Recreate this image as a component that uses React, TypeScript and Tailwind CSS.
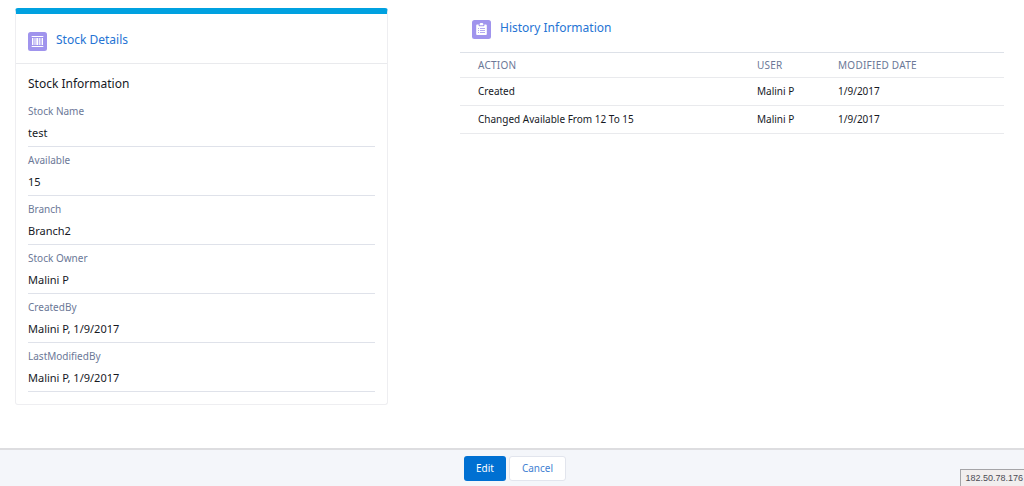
import React from 'react';

type Field = { label: string; value: string };
type HistoryEntry = { action: string; user: string; date: string };

const fields: Field[] = [
  { label: 'Stock Name', value: 'test' },
  { label: 'Available', value: '15' },
  { label: 'Branch', value: 'Branch2' },
  { label: 'Stock Owner', value: 'Malini P' },
  { label: 'CreatedBy', value: 'Malini P, 1/9/2017' },
  { label: 'LastModifiedBy', value: 'Malini P, 1/9/2017' },
];

const history: HistoryEntry[] = [
  { action: 'Created', user: 'Malini P', date: '1/9/2017' },
  { action: 'Changed Available From 12 To 15', user: 'Malini P', date: '1/9/2017' },
];

const StockIcon = () => (
  <svg viewBox="0 0 19 19" className="h-[19px] w-[19px] shrink-0" aria-hidden="true">
    <rect width="19" height="19" rx="2.5" fill="#a094ed" />
    <g fill="#fff">
      <rect x="3.5" y="4" width="12" height="1" rx="0.4" />
      <rect x="3.5" y="14" width="12" height="1" rx="0.4" />
      <rect x="4" y="6" width="1.4" height="7" />
      <rect x="6.5" y="6" width="1" height="7" />
      <rect x="8.3" y="6" width="2" height="7" />
      <rect x="11.2" y="6" width="1.2" height="7" />
      <rect x="13.6" y="6" width="1.4" height="7" />
    </g>
  </svg>
);

const HistoryIcon = () => (
  <svg viewBox="0 0 19 19" className="h-[19px] w-[19px] shrink-0" aria-hidden="true">
    <rect width="19" height="19" rx="2.5" fill="#a094ed" />
    <path
      fill="#fff"
      d="M7.6 4.2c0-.7.8-1.2 1.9-1.2s1.9.5 1.9 1.2v.6c0 .3-.2.5-.5.5H8.1c-.3 0-.5-.2-.5-.5z"
    />
    <path
      fill="#fff"
      d="M5.3 4.4h1.3v.8c0 .6.5 1.1 1.1 1.1h3.6c.6 0 1.1-.5 1.1-1.1v-.8h1.3c.6 0 1.1.5 1.1 1.1v8.4c0 .6-.5 1.1-1.1 1.1H5.3c-.6 0-1.1-.5-1.1-1.1V5.5c0-.6.5-1.1 1.1-1.1z"
    />
    <path
      stroke="#a094ed"
      strokeWidth="0.8"
      d="M6 8.5h1M8 8.5h5M6 10.5h1M8 10.5h5M6 12.5h1M8 12.5h5"
    />
  </svg>
);

const App = () => {
  return (
    <div className="flex min-h-screen flex-col bg-white font-['Noto_Sans',sans-serif] text-[11px] text-[#16191f]">
      <main className="grid flex-1 grid-cols-[373fr_544fr] items-start gap-[72px] pt-2 pr-5 pb-10 pl-[15px]">
        {/* Stock Details */}
        <section className="rounded-[3px] border border-t-[6px] border-[#eeeef1] border-t-[#00a1e0]">
          <header className="flex h-[50px] items-end gap-[9px] border-b border-[#e9eaed] px-3 pb-3">
            <StockIcon />
            <h1 className="pb-px text-[12px] leading-5">
              <a href="#stock" className="text-[#2574d4]">
                Stock Details
              </a>
            </h1>
          </header>
          <div className="px-3 pt-[10px] pb-3">
            <h2 className="pb-1 text-[12px] leading-5">Stock Information</h2>
            <dl>
              {fields.map((field) => (
                <div key={field.label} className="border-b border-[#dfe2ea] pt-[5px] pb-[3px]">
                  <dt className="text-[10px] leading-4 text-[#6b7897]">{field.label}</dt>
                  <dd className="pt-1 leading-5">{field.value}</dd>
                </div>
              ))}
            </dl>
          </div>
        </section>

        {/* History */}
        <section className="pt-[10px]">
          <header className="flex items-end gap-[9px] px-3 pb-[13px]">
            <HistoryIcon />
            <h2 className="pb-px text-[12px] leading-5">
              <a href="#history" className="text-[#2574d4]">
                History Information
              </a>
            </h2>
          </header>
          <table className="w-full table-fixed border-t border-[#dde1e8] text-left text-[10px]">
            <thead>
              <tr className="h-[25px] border-b border-[#e9eaed] tracking-wide text-[#6b7897] uppercase">
                <th className="w-[279px] pl-[18px] font-normal">Action</th>
                <th className="w-[81px] pl-[18px] font-normal">User</th>
                <th className="pl-[18px] font-normal">Modified Date</th>
              </tr>
            </thead>
            <tbody>
              {history.map((entry) => (
                <tr key={entry.action} className="h-7 border-b border-[#e9eaed]">
                  <td className="pl-[18px]">{entry.action}</td>
                  <td className="pl-[18px]">{entry.user}</td>
                  <td className="pl-[18px]">{entry.date}</td>
                </tr>
              ))}
            </tbody>
          </table>
        </section>
      </main>

      <footer className="relative flex justify-center gap-[3px] border-t-2 border-[#dddde0] bg-[#f4f6fa] pt-[6px] pb-[5px] pl-[6px] text-[10px]">
        <button type="button" className="h-[25px] rounded-[3px] bg-[#0070d2] px-3 text-white">
          Edit
        </button>
        <button
          type="button"
          className="h-[25px] rounded-[3px] border border-[#e2e5ed] bg-white px-3 text-[#3f7fd2]"
        >
          Cancel
        </button>
        {/* Server address */}
        <div className="absolute right-0 bottom-0 border-t border-l border-[#a5a5a8] bg-[#f1eeee] pr-px pl-1 font-['Liberation_Sans',sans-serif] text-[9px] leading-4 text-[#4c4c55]">
          182.50.78.176
        </div>
      </footer>
    </div>
  );
};

export default App;
